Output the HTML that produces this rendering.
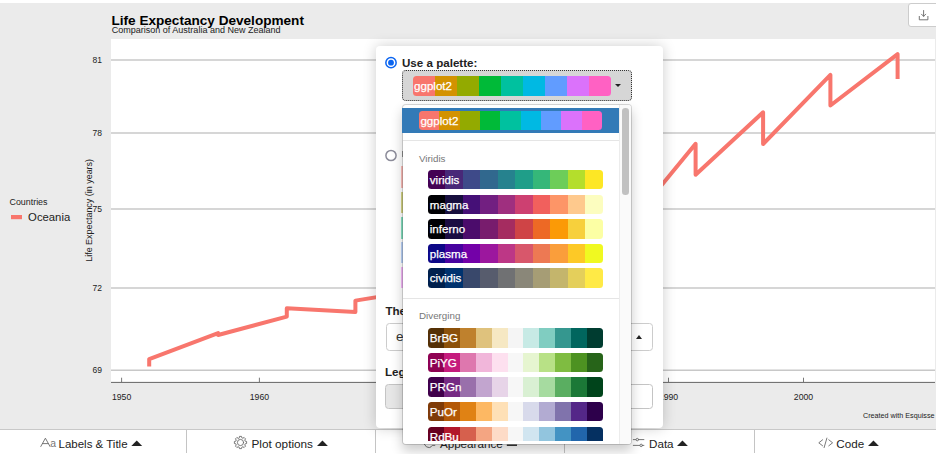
<!DOCTYPE html>
<html><head><meta charset="utf-8"><title>esquisse</title>
<style>
html,body{margin:0;padding:0;}
body{width:936px;height:454px;overflow:hidden;position:relative;background:#fff;font-family:"Liberation Sans",Arial,Helvetica,sans-serif;color:#333;}
.abs{position:absolute;}
#chart{position:absolute;left:0;top:0;}
#chart text{font-family:"Liberation Sans",Arial,Helvetica,sans-serif;fill:#222;}
.bar{position:absolute;left:0;top:429px;width:936px;height:25px;background:#fff;border-top:1px solid #c8c8c8;box-sizing:border-box;}
.bar .sep{position:absolute;top:0;width:1px;height:23px;background:#c4c4c4;}
.bar .lbl{position:absolute;top:4.5px;font-size:11.5px;line-height:14px;color:#222;white-space:nowrap;}
.car{position:absolute;width:0;height:0;border-left:5.2px solid transparent;border-right:5.2px solid transparent;border-bottom:5.6px solid #222;}
.dl{position:absolute;left:908px;top:3px;width:36px;height:24px;border:1px solid #ccc;border-radius:3px;background:#fff;box-sizing:border-box;}
.panel{position:absolute;left:375.6px;top:46px;width:287.8px;height:382.3px;background:#fff;border-radius:4px;box-shadow:0 0 14px rgba(0,0,0,.2);}
.b{font-weight:bold;font-size:11.6px;color:#222;position:absolute;white-space:nowrap;line-height:14px;}
.selbtn{position:absolute;left:402px;top:70.2px;width:230px;height:30.8px;box-sizing:border-box;border:1px dotted #333;border-radius:4px;background:#d6d6d6;}
.sw{position:absolute;border-radius:3.5px;color:#fff;font-size:11.6px;line-height:19.5px;padding-left:1.4px;-webkit-text-stroke:.25px #fff;box-sizing:border-box;white-space:nowrap;overflow:hidden;}
.dd{position:absolute;left:402px;top:103.5px;width:229.5px;height:341px;box-sizing:border-box;background:#fff;background-clip:padding-box;border:1px solid rgba(0,0,0,.15);border-radius:4px;box-shadow:0 6px 12px rgba(0,0,0,.2);}
.hdr{position:absolute;font-size:9.8px;color:#777;line-height:12px;}
.div{position:absolute;left:403px;width:216px;height:1px;background:#e5e5e5;}
.radio{position:absolute;width:12px;height:12px;border-radius:50%;box-sizing:border-box;}
</style></head><body>
<svg id="chart" width="936" height="454" viewBox="0 0 936 454">
<rect x="0" y="3" width="936" height="427" fill="#ebebeb"/>
<rect x="111" y="39" width="824" height="343.5" fill="#fff"/>
<line x1="111" x2="935" y1="370.2" y2="370.2" stroke="#c8c8c8" stroke-width="1.5"/><line x1="111" x2="935" y1="287.9" y2="287.9" stroke="#c8c8c8" stroke-width="1.5"/><line x1="111" x2="935" y1="208.9" y2="208.9" stroke="#c8c8c8" stroke-width="1.5"/><line x1="111" x2="935" y1="133.0" y2="133.0" stroke="#c8c8c8" stroke-width="1.5"/><line x1="111" x2="935" y1="60.0" y2="60.0" stroke="#c8c8c8" stroke-width="1.5"/>
<line x1="111" x2="935" y1="382.4" y2="382.4" stroke="#555" stroke-width="0.9"/>
<line x1="121.6" x2="121.6" y1="377.7" y2="382" stroke="#555" stroke-width="0.8"/><text x="121.6" y="400.3" text-anchor="middle" font-size="8.7">1950</text><line x1="259.4" x2="259.4" y1="377.7" y2="382" stroke="#555" stroke-width="0.8"/><text x="259.4" y="400.3" text-anchor="middle" font-size="8.7">1960</text><line x1="396.4" x2="396.4" y1="377.7" y2="382" stroke="#555" stroke-width="0.8"/><text x="396.4" y="400.3" text-anchor="middle" font-size="8.7">1970</text><line x1="532.8" x2="532.8" y1="377.7" y2="382" stroke="#555" stroke-width="0.8"/><text x="532.8" y="400.3" text-anchor="middle" font-size="8.7">1980</text><line x1="668.5" x2="668.5" y1="377.7" y2="382" stroke="#555" stroke-width="0.8"/><text x="668.5" y="400.3" text-anchor="middle" font-size="8.7">1990</text><line x1="803.5" x2="803.5" y1="377.7" y2="382" stroke="#555" stroke-width="0.8"/><text x="803.5" y="400.3" text-anchor="middle" font-size="8.7">2000</text>
<text x="102" y="373.1" text-anchor="end" font-size="8.5">69</text><text x="102" y="290.8" text-anchor="end" font-size="8.5">72</text><text x="102" y="211.8" text-anchor="end" font-size="8.5">75</text><text x="102" y="135.9" text-anchor="end" font-size="8.5">78</text><text x="102" y="62.9" text-anchor="end" font-size="8.5">81</text>
<polyline points="149.2,366.6 149.2,359.1 218.1,333.1 218.1,335.0 286.8,316.6 286.8,308.2 355.4,312.0 355.4,300.6 423.8,289.5 423.8,290.6 492.0,248.0 492.0,281.8 560.0,215.4 560.0,238.8 627.9,174.9 627.9,226.3 695.6,143.8 695.6,174.7 763.1,112.3 763.1,144.0 830.4,74.9 830.4,105.5 897.6,54.2 897.6,78.9" fill="none" stroke="#F8766D" stroke-width="4" stroke-linejoin="round" stroke-linecap="butt"/>
<text x="111.5" y="24.5" font-size="13.58" font-weight="bold" style="fill:#000">Life Expectancy Development</text>
<text x="111.7" y="32.5" font-size="9.02">Comparison of Australia and New Zealand</text>
<text transform="translate(92,210.4) rotate(-90)" text-anchor="middle" font-size="8.95">Life Expectancy (in years)</text>
<text x="9.5" y="205" font-size="8.9">Countries</text>
<rect x="11" y="215" width="11" height="4.2" fill="#F8766D"/>
<text x="28.1" y="221.2" font-size="11.3">Oceania</text>
<text x="934.5" y="418.1" text-anchor="end" font-size="7.2">Created with Esquisse</text>
</svg>

<div class="dl"><svg width="28" height="22" viewBox="0 0 28 22" style="position:absolute;left:0;top:0"><g fill="none" stroke="#666" stroke-width="0.9" stroke-linecap="round" stroke-linejoin="round"><path d="M14.6 6.5v5.8M12.5 10.2l2.1 2.1 2.1-2.1M10.3 12.4v3.4h8.6v-3.4"/></g></svg></div>

<div class="bar">
 <div class="sep" style="left:186px"></div><div class="sep" style="left:375px"></div><div class="sep" style="left:564px"></div><div class="sep" style="left:754px"></div>
 <svg class="abs" style="left:0;top:-1px" width="936" height="26" viewBox="0 429 936 26">
  <g font-family="Liberation Sans, Arial, Helvetica, sans-serif" font-size="11.65" fill="#222">
   <text x="50.2" y="447.3" font-size="10.4" fill="#777">a</text>
   <text x="58.5" y="447.8" font-size="11.5">Labels &amp; Title</text>
   <text x="251.5" y="447.8" font-size="11.78">Plot options</text>
   <text x="439.9" y="447.8">Appearance</text>
   <text x="649" y="447.8">Data</text>
   <text x="836.3" y="447.8">Code</text>
  </g>
  <g fill="#222">
   <path d="M131.3 445.9l5.45-5.4 5.45 5.4z"/>
   <path d="M317 445.9l5.45-5.4 5.45 5.4z"/>
   <path d="M677 445.9l5.45-5.4 5.45 5.4z"/>
   <path d="M868 445.9l5.45-5.4 5.45 5.4z"/>
   <rect x="506.8" y="444.5" width="10.2" height="1.4"/>
  </g>
  <g fill="none" stroke="#6a6a6a" stroke-width="0.9" stroke-linejoin="round" stroke-linecap="round">
   <path d="M40.8 446.5L45.4 438.2L50 446.5M42.5 443.6H48.3"/>
   <circle cx="240.5" cy="442.5" r="3.1"/>
   <path d="M239.23 437.77 L239.48 436.39 L241.52 436.39 L241.77 437.77 L242.95 438.26 L244.10 437.45 L245.55 438.90 L244.74 440.05 L245.23 441.23 L246.61 441.48 L246.61 443.52 L245.23 443.77 L244.74 444.95 L245.55 446.10 L244.10 447.55 L242.95 446.74 L241.77 447.23 L241.52 448.61 L239.48 448.61 L239.23 447.23 L238.05 446.74 L236.90 447.55 L235.45 446.10 L236.26 444.95 L235.77 443.77 L234.39 443.52 L234.39 441.48 L235.77 441.23 L236.26 440.05 L235.45 438.90 L236.90 437.45 L238.05 438.26Z"/>
   <path d="M633.3 439.6h10.6M633.3 445.4h10.6"/><circle cx="637.3" cy="439.6" r="1.25" fill="#fff"/><circle cx="641.2" cy="445.4" r="1.25" fill="#fff"/>
   <path d="M822.6 439.8l-3.8 3 3.8 3M828.8 439.8l3.8 3-3.8 3M826.9 438.1l-2.8 9.5"/>
   <path d="M424.3 444.2Q426.2 448 429.3 447.6Q431.2 447.3 432.2 445.4h2.6"/>
  </g>
 </svg>
</div>

<div class="panel"></div>
<!-- panel contents -->
<svg class="abs" style="left:383px;top:54px" width="16" height="16" viewBox="383 54 16 16"><circle cx="391" cy="62.7" r="5.15" fill="#fff" stroke="#0a64f0" stroke-width="1.5"/><circle cx="391" cy="62.7" r="2.9" fill="#0a64f0"/></svg>
<div class="b" style="left:402px;top:55.7px">Use a palette:</div>
<div class="selbtn"></div>
<div class="sw" style="left:412.6px;top:76.3px;width:198.8px;height:19.5px;background:linear-gradient(to right,#F8766D 0.000% 11.111%,#D39200 11.111% 22.222%,#93AA00 22.222% 33.333%,#00BA38 33.333% 44.444%,#00C19F 44.444% 55.556%,#00B9E3 55.556% 66.667%,#619CFF 66.667% 77.778%,#DB72FB 77.778% 88.889%,#FF61C3 88.889% 100.000%);">ggplot2</div>
<div class="abs" style="left:614.6px;top:83.6px;width:0;height:0;border-left:3.4px solid transparent;border-right:3.4px solid transparent;border-top:3.6px solid #222"></div>

<svg class="abs" style="left:383px;top:147px" width="16" height="16" viewBox="383 147 16 16"><circle cx="391" cy="155.5" r="5.1" fill="#fff" stroke="#8c8c9a" stroke-width="1.5"/></svg><div class="abs" style="left:401.7px;top:151.2px;width:1px;height:5.5px;background:#999"></div>
<div class="abs" style="left:401px;top:165.6px;width:2px;height:22px;background:#F8766D;opacity:.48"></div>
<div class="abs" style="left:401px;top:192px;width:2px;height:21px;background:#A3A500;opacity:.48"></div>
<div class="abs" style="left:401px;top:217px;width:2px;height:21.5px;background:#00BF7D;opacity:.48"></div>
<div class="abs" style="left:401px;top:242px;width:2px;height:21px;background:#6fa0f0;opacity:.48"></div>
<div class="abs" style="left:401px;top:267px;width:2px;height:21px;background:#E76BF3;opacity:.48"></div>

<div class="b" style="left:385.4px;top:304.1px">Theme</div>
<div class="abs" style="left:385.5px;top:323px;width:267.6px;height:28px;box-sizing:border-box;border:1px solid #ccc;border-radius:3.5px;background:#fff"></div>
<div class="abs" style="left:396px;top:329px;font-size:13.5px;line-height:16px;color:#333">economics</div>
<div class="abs" style="left:636.1px;top:334.8px;width:0;height:0;border-left:3.5px solid transparent;border-right:3.5px solid transparent;border-bottom:4.3px solid #222"></div>
<div class="b" style="left:384.9px;top:365px">Legend position:</div>
<div class="abs" style="left:385px;top:384.3px;width:268px;height:24.8px;box-sizing:border-box;border:1px solid #c4c4c4;border-radius:3.5px;background:linear-gradient(to right,#e6e6e6 0 53px,#fff 53px)"></div>

<div class="dd"></div>
<div class="abs" style="left:619px;top:104.5px;width:11.5px;height:339px;background:#fafafa;border-left:1px solid #ececec;box-sizing:border-box;border-radius:0 3px 3px 0"></div>
<div class="abs" style="left:622.2px;top:108.3px;width:6.6px;height:86.5px;border-radius:3.3px;background:#c1c1c1"></div>
<div class="abs" style="left:402.3px;top:108px;width:216.7px;height:24.5px;background:#337ab7"></div>
<div class="sw" style="left:419px;top:110.6px;width:183.4px;height:19.6px;background:linear-gradient(to right,#F8766D 0.000% 11.111%,#D39200 11.111% 22.222%,#93AA00 22.222% 33.333%,#00BA38 33.333% 44.444%,#00C19F 44.444% 55.556%,#00B9E3 55.556% 66.667%,#619CFF 66.667% 77.778%,#DB72FB 77.778% 88.889%,#FF61C3 88.889% 100.000%);">ggplot2</div>
<div class="div" style="top:140px"></div>
<div class="hdr" style="left:419px;top:153px">Viridis</div>
<div class="div" style="top:297.5px"></div>
<div class="hdr" style="left:419px;top:310.4px">Diverging</div>
<div class="sw" style="left:428.4px;top:169.7px;width:174.2px;height:19.5px;background:linear-gradient(to right,#440154 0.000% 10.000%,#482878 10.000% 20.000%,#3E4A89 20.000% 30.000%,#31688E 30.000% 40.000%,#26828E 40.000% 50.000%,#1F9E89 50.000% 60.000%,#35B779 60.000% 70.000%,#6DCD59 70.000% 80.000%,#B4DE2C 80.000% 90.000%,#FDE725 90.000% 100.000%);">viridis</div><div class="sw" style="left:428.4px;top:194.6px;width:174.2px;height:19.5px;background:linear-gradient(to right,#000004 0.000% 10.000%,#180F3E 10.000% 20.000%,#451077 20.000% 30.000%,#721F81 30.000% 40.000%,#9F2F7F 40.000% 50.000%,#CD4071 50.000% 60.000%,#F1605D 60.000% 70.000%,#FD9567 70.000% 80.000%,#FEC98D 80.000% 90.000%,#FCFDBF 90.000% 100.000%);">magma</div><div class="sw" style="left:428.4px;top:219.1px;width:174.2px;height:19.5px;background:linear-gradient(to right,#000004 0.000% 10.000%,#1B0C42 10.000% 20.000%,#4B0C6B 20.000% 30.000%,#781C6D 30.000% 40.000%,#A52C60 40.000% 50.000%,#CF4446 50.000% 60.000%,#ED6925 60.000% 70.000%,#FB9A06 70.000% 80.000%,#F7D03C 80.000% 90.000%,#FCFFA4 90.000% 100.000%);">inferno</div><div class="sw" style="left:428.4px;top:243.6px;width:174.2px;height:19.5px;background:linear-gradient(to right,#0D0887 0.000% 10.000%,#47039F 10.000% 20.000%,#7301A8 20.000% 30.000%,#9C179E 30.000% 40.000%,#BD3786 40.000% 50.000%,#D8576B 50.000% 60.000%,#ED7953 60.000% 70.000%,#FA9E3B 70.000% 80.000%,#FDC926 80.000% 90.000%,#F0F921 90.000% 100.000%);">plasma</div><div class="sw" style="left:428.4px;top:268.2px;width:174.2px;height:19.5px;background:linear-gradient(to right,#00204D 0.000% 10.000%,#00336F 10.000% 20.000%,#39486B 20.000% 30.000%,#575C6D 30.000% 40.000%,#707173 40.000% 50.000%,#8A8779 50.000% 60.000%,#A69D75 60.000% 70.000%,#C4B56C 70.000% 80.000%,#E4CF5B 80.000% 90.000%,#FFEA46 90.000% 100.000%);">cividis</div><div class="sw" style="left:428.4px;top:328.1px;width:174.2px;height:19.5px;background:linear-gradient(to right,#543005 0.000% 9.091%,#8C510A 9.091% 18.182%,#BF812D 18.182% 27.273%,#DFC27D 27.273% 36.364%,#F6E8C3 36.364% 45.455%,#F5F5F5 45.455% 54.545%,#C7EAE5 54.545% 63.636%,#80CDC1 63.636% 72.727%,#35978F 72.727% 81.818%,#01665E 81.818% 90.909%,#003C30 90.909% 100.000%);">BrBG</div><div class="sw" style="left:428.4px;top:352.7px;width:174.2px;height:19.5px;background:linear-gradient(to right,#8E0152 0.000% 9.091%,#C51B7D 9.091% 18.182%,#DE77AE 18.182% 27.273%,#F1B6DA 27.273% 36.364%,#FDE0EF 36.364% 45.455%,#F7F7F7 45.455% 54.545%,#E6F5D0 54.545% 63.636%,#B8E186 63.636% 72.727%,#7FBC41 72.727% 81.818%,#4D9221 81.818% 90.909%,#276419 90.909% 100.000%);">PiYG</div><div class="sw" style="left:428.4px;top:377.3px;width:174.2px;height:19.5px;background:linear-gradient(to right,#40004B 0.000% 9.091%,#762A83 9.091% 18.182%,#9970AB 18.182% 27.273%,#C2A5CF 27.273% 36.364%,#E7D4E8 36.364% 45.455%,#F7F7F7 45.455% 54.545%,#D9F0D3 54.545% 63.636%,#A6DBA0 63.636% 72.727%,#5AAE61 72.727% 81.818%,#1B7837 81.818% 90.909%,#00441B 90.909% 100.000%);">PRGn</div><div class="sw" style="left:428.4px;top:401.9px;width:174.2px;height:19.5px;background:linear-gradient(to right,#7F3B08 0.000% 9.091%,#B35806 9.091% 18.182%,#E08214 18.182% 27.273%,#FDB863 27.273% 36.364%,#FEE0B6 36.364% 45.455%,#F7F7F7 45.455% 54.545%,#D8DAEB 54.545% 63.636%,#B2ABD2 63.636% 72.727%,#8073AC 72.727% 81.818%,#542788 81.818% 90.909%,#2D004B 90.909% 100.000%);">PuOr</div><div class="sw" style="left:428.4px;top:426.8px;width:174.2px;height:14.1px;background:linear-gradient(to right,#67001F 0.000% 9.091%,#B2182B 9.091% 18.182%,#D6604D 18.182% 27.273%,#F4A582 27.273% 36.364%,#FDDBC7 36.364% 45.455%,#F7F7F7 45.455% 54.545%,#D1E5F0 54.545% 63.636%,#92C5DE 63.636% 72.727%,#4393C3 72.727% 81.818%,#2166AC 81.818% 90.909%,#053061 90.909% 100.000%);border-radius:3.5px 3.5px 0 0;">RdBu</div>
</body></html>
